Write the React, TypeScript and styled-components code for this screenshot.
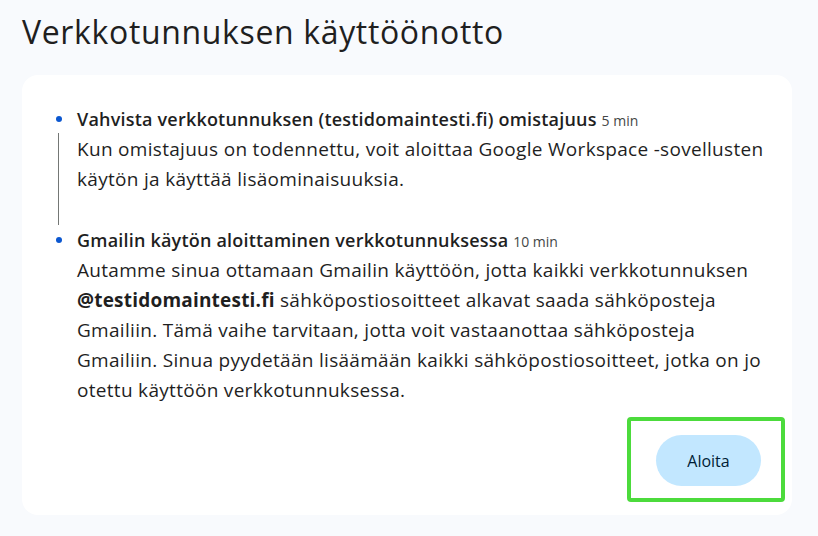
import { createGlobalStyle, styled } from 'styled-components';

const GlobalStyle = createGlobalStyle`
  html, body {
    margin: 0;
    padding: 0;
    background: #f8fafd;
  }
  body {
    font-family: 'Open Sans', 'Liberation Sans', sans-serif;
    color: #1f1f1f;
  }
`;

const steps = [
  {
    title: 'Vahvista verkkotunnuksen (testidomaintesti.fi) omistajuus',
    time: '5 min',
    body: (
      <>
        Kun omistajuus on todennettu, voit aloittaa Google Workspace -sovellusten
        <br />
        käytön ja käyttää lisäominaisuuksia.
      </>
    ),
  },
  {
    title: 'Gmailin käytön aloittaminen verkkotunnuksessa',
    time: '10 min',
    body: (
      <>
        Autamme sinua ottamaan Gmailin käyttöön, jotta kaikki verkkotunnuksen
        <br />
        <strong>@testidomaintesti.fi</strong> sähköpostiosoitteet alkavat saada sähköposteja
        <br />
        Gmailiin. Tämä vaihe tarvitaan, jotta voit vastaanottaa sähköposteja
        <br />
        Gmailiin. Sinua pyydetään lisäämään kaikki sähköpostiosoitteet, jotka on jo
        <br />
        otettu käyttöön verkkotunnuksessa.
      </>
    ),
  },
];

function App() {
  return (
    <Page>
      <GlobalStyle />
      <Title>Verkkotunnuksen käyttöönotto</Title>
      <Card>
        <Steps>
          {steps.map((step, i) => (
            <Step key={step.title} $last={i === steps.length - 1}>
              <Dot />
              <StepTitle>
                {step.title} <Time>{step.time}</Time>
              </StepTitle>
              <StepBody>{step.body}</StepBody>
            </Step>
          ))}
        </Steps>
        <Actions>
          <Highlight>
            <StartButton>Aloita</StartButton>
          </Highlight>
        </Actions>
      </Card>
    </Page>
  );
}

const Page = styled.div`
  padding: 11px 26px 22px 22px;
`;

const Title = styled.h1`
  margin: 0 0 22px 0;
  font-size: 32px;
  font-weight: 400;
  line-height: 42px;
  letter-spacing: 0.65px;
  color: #1f1f1f;
`;

const Card = styled.div`
  background: #fff;
  border-radius: 16px;
  padding: 29px 7px 13px 34px;
  display: flex;
  flex-direction: column;
`;

const Steps = styled.ol`
  list-style: none;
  margin: 0;
  padding: 0;
`;

const Step = styled.li<{ $last: boolean }>`
  position: relative;
  padding: 0 0 ${(p) => (p.$last ? '0' : '31px')} 21px;
  &::before {
    content: '';
    display: ${(p) => (p.$last ? 'none' : 'block')};
    position: absolute;
    left: 2px;
    top: 29px;
    bottom: 0;
    width: 1px;
    background: #747775;
  }
`;

const Dot = styled.span`
  position: absolute;
  left: 0;
  top: 12px;
  width: 6px;
  height: 6px;
  border-radius: 50%;
  background: #0b57d0;
`;

const StepTitle = styled.div`
  height: 30px;
  font-size: 18px;
  font-weight: 600;
  line-height: 30px;
  letter-spacing: 0.2px;
  white-space: nowrap;
  color: #1f1f1f;
`;

const Time = styled.span`
  font-size: 14px;
  font-weight: 400;
  line-height: 1;
  letter-spacing: 0;
  color: #444746;
`;

const StepBody = styled.p`
  margin: 0;
  font-size: 19px;
  line-height: 30px;
  letter-spacing: 0.3px;
  white-space: nowrap;
  color: #1f1f1f;

  strong {
    font-weight: 700;
    letter-spacing: 0.2px;
  }
`;

const Actions = styled.div`
  display: flex;
  justify-content: flex-end;
  margin-top: 12px;
`;

const Highlight = styled.div`
  border: 4px solid #4cdb3c;
  border-radius: 4px;
  padding: 14px 20px 12px 25px;
  width: 158px;
  box-sizing: border-box;
  display: flex;
  justify-content: center;
`;

const StartButton = styled.button`
  border: none;
  background: #c2e7ff;
  color: #001d35;
  font-family: 'Open Sans', 'Liberation Sans', sans-serif;
  font-size: 16px;
  font-weight: 400;
  height: 51px;
  width: 105px;
  border-radius: 26px;
  cursor: pointer;
`;

export default App;
